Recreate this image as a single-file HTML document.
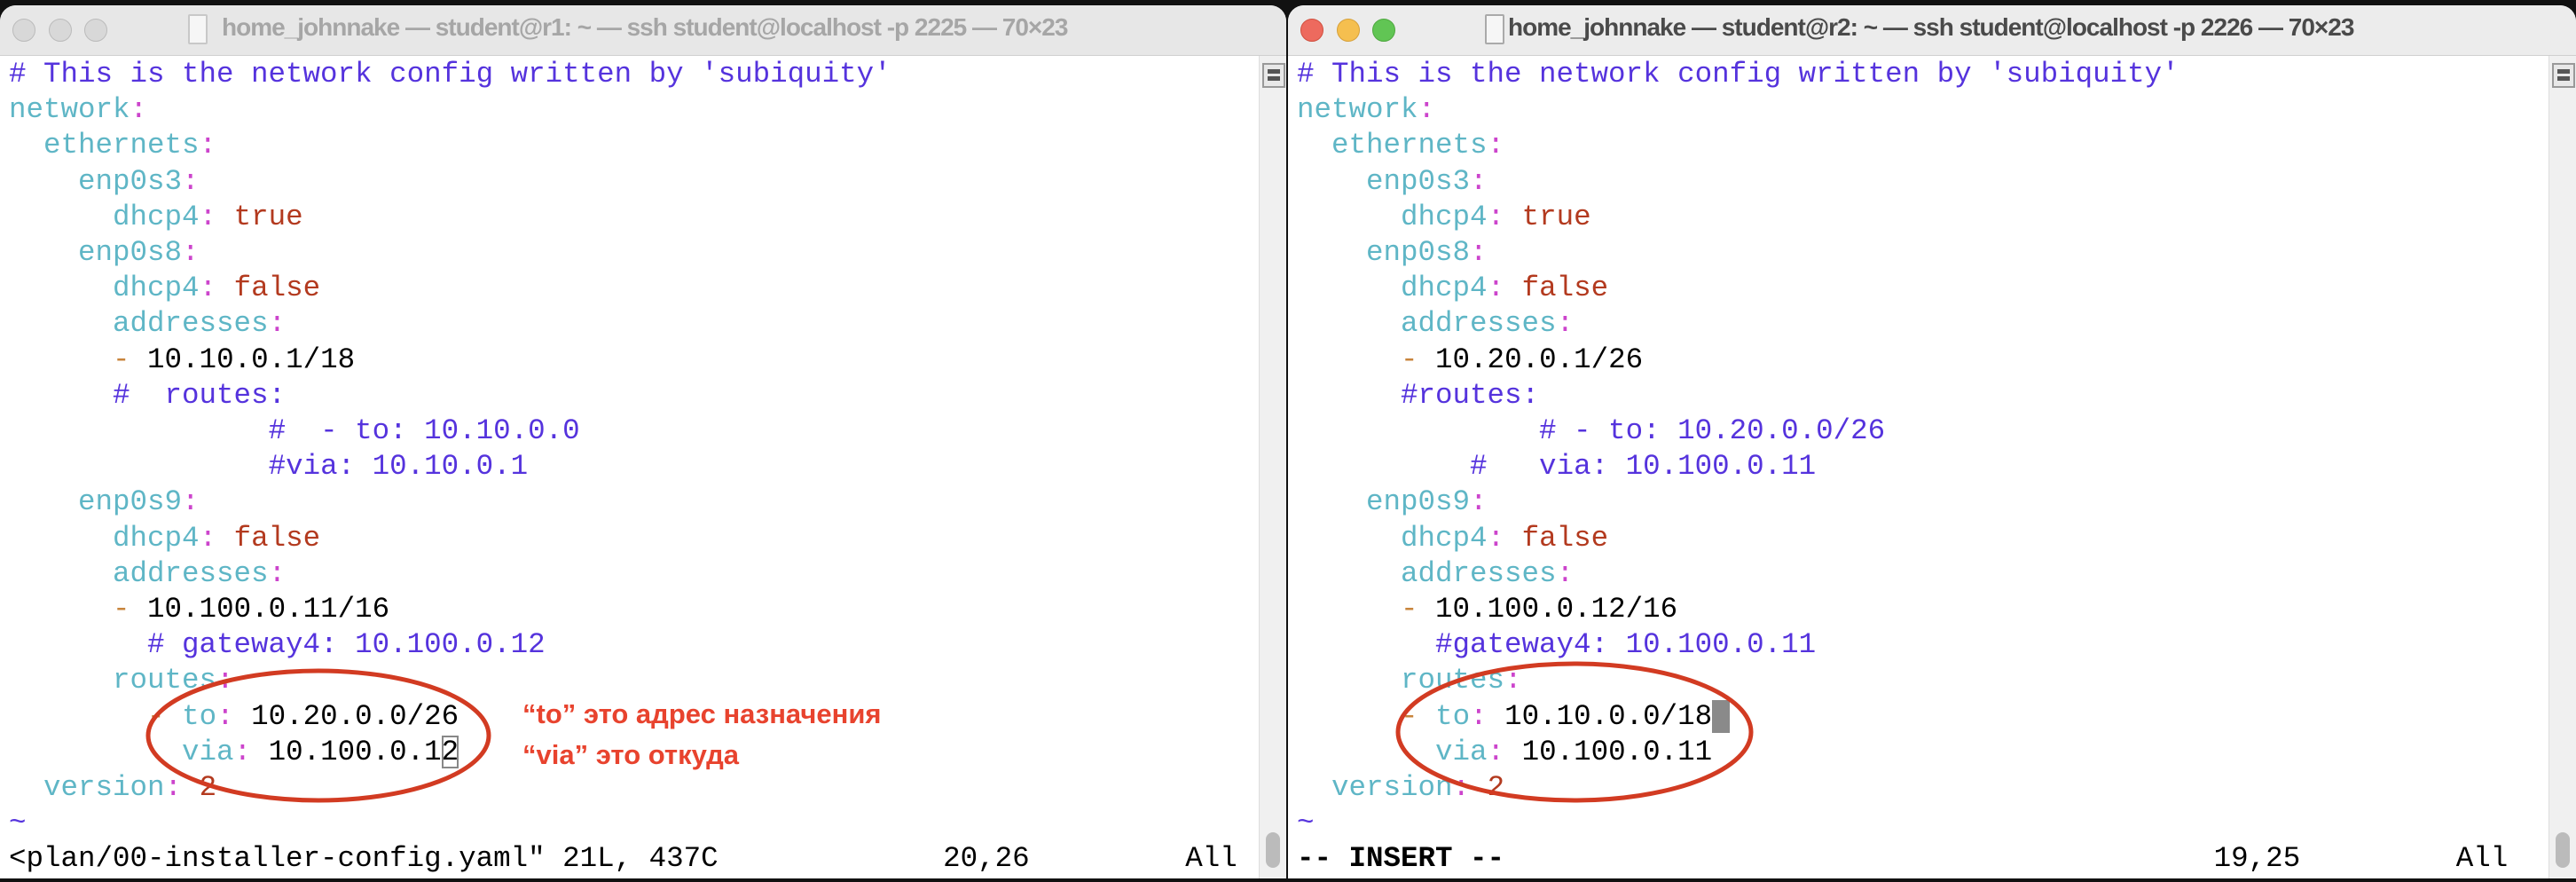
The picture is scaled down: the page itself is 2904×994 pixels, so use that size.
<!DOCTYPE html>
<html><head><meta charset="utf-8"><style>
*{margin:0;padding:0}
body{width:2904px;height:994px;background:#111;position:relative;overflow:hidden;font-family:"Liberation Mono",monospace}
.win{position:absolute;top:6px;height:984px;background:#fff;border-radius:18px 18px 0 0;overflow:hidden}
.tb{position:absolute;left:0;top:0;right:0;height:56px;border-bottom:1px solid #d0d0d0}
.title{position:absolute;top:9px;font:bold 28px "Liberation Sans",sans-serif;letter-spacing:-1px;white-space:nowrap}
.dot{position:absolute;top:15px;width:24px;height:24px;border-radius:50%}
.doc{position:absolute;top:10px;width:18px;height:30px;border:2px solid #aaa;border-radius:2px;background:#f6f6f6}
pre{position:absolute;font-family:"Liberation Mono",monospace;font-size:32.5px;line-height:40.2px;color:#000}
.c{color:#5533dd}.k{color:#5fb6c6}.p{color:#cc44cc}.r{color:#b33a1f}.d{color:#c8843c}
.sb{position:absolute;top:57px;width:30px;bottom:0;background:#f0f0f0;border-left:1px solid #ddd}
.sbi{position:absolute;top:8px;left:3px;width:22px;height:24px;border:2px solid #999;background:#e8e8e8}
.sbi:before,.sbi:after{content:"";position:absolute;left:4px;width:14px;height:5px;background:#555}
.sbi:before{top:5px}.sbi:after{top:13px}
.thumb{position:absolute;bottom:12px;left:7px;width:16px;height:40px;border-radius:8px;background:#bbb}
.ann{position:absolute;font:bold 31px "Liberation Sans",sans-serif;color:#e8432e;letter-spacing:0;white-space:nowrap}
</style></head><body>
<div class="win" style="left:0;width:1450px;">
 <div class="tb" style="background:#e7e7e7"></div>
 <div class="dot" style="left:14px;background:#d8d8d8;border:1px solid #bbb"></div>
 <div class="dot" style="left:55px;background:#d8d8d8;border:1px solid #bbb"></div>
 <div class="dot" style="left:95px;background:#d8d8d8;border:1px solid #bbb"></div>
 <div class="doc" style="left:212px;border-color:#c8c8c8"></div>
 <div class="title" style="left:250px;color:#a6a6a6">home_johnnake — student@r1: ~ — ssh student@localhost -p 2225 — 70×23</div>
 <pre style="left:10px;top:58px"><span class="c"># This is the network config written by 'subiquity'</span>
<span class="k">network</span><span class="p">:</span>
  <span class="k">ethernets</span><span class="p">:</span>
    <span class="k">enp0s3</span><span class="p">:</span>
      <span class="k">dhcp4</span><span class="p">:</span> <span class="r">true</span>
    <span class="k">enp0s8</span><span class="p">:</span>
      <span class="k">dhcp4</span><span class="p">:</span> <span class="r">false</span>
      <span class="k">addresses</span><span class="p">:</span>
      <span class="d">-</span> 10.10.0.1/18
      <span class="c">#  routes:</span>
               <span class="c">#  - to: 10.10.0.0</span>
               <span class="c">#via: 10.10.0.1</span>
    <span class="k">enp0s9</span><span class="p">:</span>
      <span class="k">dhcp4</span><span class="p">:</span> <span class="r">false</span>
      <span class="k">addresses</span><span class="p">:</span>
      <span class="d">-</span> 10.100.0.11/16
        <span class="c"># gateway4: 10.100.0.12</span>
      <span class="k">routes</span><span class="p">:</span>
        <span class="d">-</span> <span class="k">to</span><span class="p">:</span> 10.20.0.0/26
          <span class="k">via</span><span class="p">:</span> 10.100.0.1<span style="outline:2px solid #888;outline-offset:-2px">2</span>
  <span class="k">version</span><span class="p">:</span> <span class="r">2</span>
<span class="c">~</span>
&lt;plan/00-installer-config.yaml" 21L, 437C             20,26         All</pre>
 <div class="sb" style="right:0"><div class="sbi"></div><div class="thumb"></div></div>
</div>
<div class="win" style="left:1452px;width:1452px;">
 <div class="tb" style="background:#ececec"></div>
 <div class="dot" style="left:14px;background:#ed6a5e;border:1px solid #d0503f"></div>
 <div class="dot" style="left:55px;background:#f5bf4f;border:1px solid #d6a03a"></div>
 <div class="dot" style="left:95px;background:#61c554;border:1px solid #4ea83f"></div>
 <div class="doc" style="left:222px"></div>
 <div class="title" style="left:248px;color:#4a4a4a">home_johnnake — student@r2: ~ — ssh student@localhost -p 2226 — 70×23</div>
 <pre style="left:10px;top:58px"><span class="c"># This is the network config written by 'subiquity'</span>
<span class="k">network</span><span class="p">:</span>
  <span class="k">ethernets</span><span class="p">:</span>
    <span class="k">enp0s3</span><span class="p">:</span>
      <span class="k">dhcp4</span><span class="p">:</span> <span class="r">true</span>
    <span class="k">enp0s8</span><span class="p">:</span>
      <span class="k">dhcp4</span><span class="p">:</span> <span class="r">false</span>
      <span class="k">addresses</span><span class="p">:</span>
      <span class="d">-</span> 10.20.0.1/26
      <span class="c">#routes:</span>
              <span class="c"># - to: 10.20.0.0/26</span>
          <span class="c">#   via: 10.100.0.11</span>
    <span class="k">enp0s9</span><span class="p">:</span>
      <span class="k">dhcp4</span><span class="p">:</span> <span class="r">false</span>
      <span class="k">addresses</span><span class="p">:</span>
      <span class="d">-</span> 10.100.0.12/16
        <span class="c">#gateway4: 10.100.0.11</span>
      <span class="k">routes</span><span class="p">:</span>
      <span class="d">-</span> <span class="k">to</span><span class="p">:</span> 10.10.0.0/18<span style="background:#8a8a8a"> </span>
        <span class="k">via</span><span class="p">:</span> 10.100.0.11
  <span class="k">version</span><span class="p">:</span> <span class="r">2</span>
<span class="c">~</span>
<b>-- INSERT --</b>                                         19,25         All</pre>
 <div class="sb" style="right:0"><div class="sbi"></div><div class="thumb"></div></div>
</div>
<svg style="position:absolute;left:0;top:0" width="2904" height="994">
 <ellipse cx="359" cy="829" rx="192" ry="73" fill="none" stroke="#d23b22" stroke-width="5"/>
 <ellipse cx="1775" cy="825" rx="199" ry="77" fill="none" stroke="#d23b22" stroke-width="5"/>
</svg>
<div class="ann" style="left:589px;top:787px">“to” это адрес назначения</div>
<div class="ann" style="left:589px;top:833px">“via” это откуда</div>
</body></html>
